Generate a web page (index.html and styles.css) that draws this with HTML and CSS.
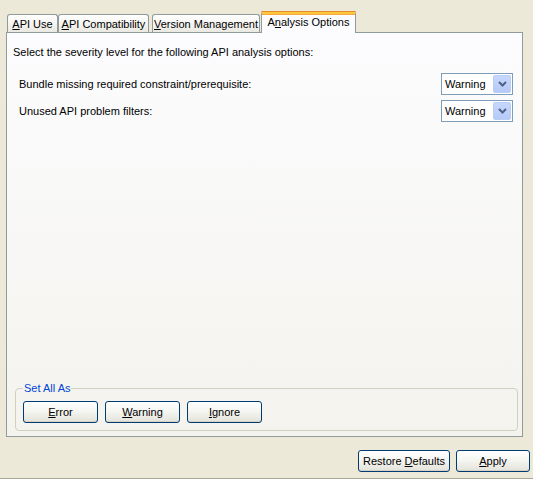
FILE: index.html
```html
<!DOCTYPE html>
<html>
<head>
<meta charset="utf-8">
<link rel="stylesheet" href="styles.css">
</head>
<body>
<div class="window">
  <div class="tabs">
    <div class="tab t1"><span><u>A</u>PI Use</span></div>
    <div class="tab t2"><span><u>A</u>PI Compatibility</span></div>
    <div class="tab t3"><span><u>V</u>ersion Management</span></div>
    <div class="tab active t4"><span>A<u>n</u>alysis Options</span></div>
  </div>
  <div class="panel">
    <div class="intro">Select the severity level for the following API analysis options:</div>
    <div class="rows">
      <div class="row">
        <span class="label">Bundle missing required constraint/prerequisite:</span>
        <div class="combo"><span class="value">Warning</span><span class="arrow"><svg width="9" height="6" viewBox="0 0 9 6"><path d="M1 1 L4.5 4.5 L8 1" fill="none" stroke="#4D6185" stroke-width="2"/></svg></span></div>
      </div>
      <div class="row">
        <span class="label">Unused API problem filters:</span>
        <div class="combo"><span class="value">Warning</span><span class="arrow"><svg width="9" height="6" viewBox="0 0 9 6"><path d="M1 1 L4.5 4.5 L8 1" fill="none" stroke="#4D6185" stroke-width="2"/></svg></span></div>
      </div>
    </div>
    <div class="spacer"></div>
    <fieldset class="group">
      <legend>Set All As</legend>
      <div class="group-buttons">
        <button class="btn"><u>E</u>rror</button>
        <button class="btn"><u>W</u>arning</button>
        <button class="btn"><u>I</u>gnore</button>
      </div>
    </fieldset>
  </div>
  <div class="footer">
    <button class="btn restore">Restore <u>D</u>efaults</button>
    <button class="btn apply"><u>A</u>pply</button>
  </div>
</div>
</body>
</html>
```
FILE: styles.css
```css
* { box-sizing: border-box; }
html, body { margin: 0; padding: 0; }
body {
  width: 533px;
  height: 479px;
  background: #ECE9D8;
  font-family: "Liberation Sans", Arial, sans-serif;
  font-size: 11px;
  color: #000;
  overflow: hidden;
  border-bottom: 1px solid #ACA899;
}
.window {
  padding: 0 10px 0 6px;
}
.tabs {
  display: flex;
  align-items: flex-end;
  height: 33px;
  padding-left: 1px;
  position: relative;
  z-index: 2;
  margin-bottom: -1px;
}
.tab {
  height: 18px;
  border: 1px solid #919B9C;
  border-bottom: none;
  border-radius: 3px 3px 0 0;
  background: linear-gradient(#FFFFFF, #F3F3EF 60%, #E9E8E1);
  display: flex;
  align-items: center;
  justify-content: center;
  padding-top: 1px;
  margin-bottom: 1px;
}
.t1 { width: 51px; margin-right: 0; }
.t2 { width: 91px; margin-right: 3px; }
.t3 { width: 108px; margin-right: 1px; }
.tab.active {
  width: 95px;
  height: 22px;
  margin-bottom: 0;
  background: #FCFCFE;
  border-top: 3px solid #FFC83C;
  box-shadow: inset 0 1px 0 #F6A93A;
  position: relative;
  align-items: flex-start;
  padding-top: 2px;
}
.tab.active::before {
  content: "";
  position: absolute;
  left: -1px;
  right: -1px;
  top: -3px;
  height: 1px;
  background: #E68B2C;
  border-radius: 3px 3px 0 0;
}
.panel {
  height: 405px;
  border: 1px solid #919B9C;
  background: linear-gradient(#FCFCFE, #F4F3EE);
  display: flex;
  flex-direction: column;
  padding: 12px 6px 5px 6px;
}
.intro {
  line-height: 14px;
}
.rows {
  margin-top: 14px;
  display: flex;
  flex-direction: column;
  gap: 5px;
  padding: 0 3px 0 6px;
}
.row {
  display: flex;
  align-items: center;
  justify-content: space-between;
  height: 22px;
}
.combo {
  width: 72px;
  height: 22px;
  border: 1px solid #7F9DB9;
  background: #fff;
  display: flex;
  align-items: center;
  justify-content: space-between;
  padding: 1px 1px 1px 3px;
}
.arrow {
  width: 18px;
  height: 18px;
  border-radius: 2px;
  background: linear-gradient(#C6D7FD, #B6CAF8);
  border: 1px solid #B9CDF5;
  display: flex;
  align-items: center;
  justify-content: center;
}
.spacer { flex: 1; }
.group {
  margin: 0 0 0 2px;
  width: 503px;
  height: 49px;
  border: 1px solid #D0D0BF;
  border-radius: 4px;
  padding: 6px 7px 0 7px;
}
.group legend {
  color: #0046D5;
  padding: 0 1px;
  margin-left: 0;
  line-height: 13px;
}
.group-buttons {
  display: flex;
  gap: 7px;
}
.btn {
  font-family: inherit;
  font-size: 11px;
  color: #000;
  height: 22px;
  width: 75px;
  border: 1px solid #003C74;
  border-radius: 3px;
  background: linear-gradient(#FFFFFF, #F4F4F0 50%, #E3E2DA);
  padding: 0;
  box-shadow: inset 0 -1px 0 #D6D0C5;
}
.footer {
  display: flex;
  justify-content: flex-end;
  gap: 6px;
  margin: 13px -7px 0 0;
}
.restore { width: 92px; }
.apply { width: 74px; }
```
